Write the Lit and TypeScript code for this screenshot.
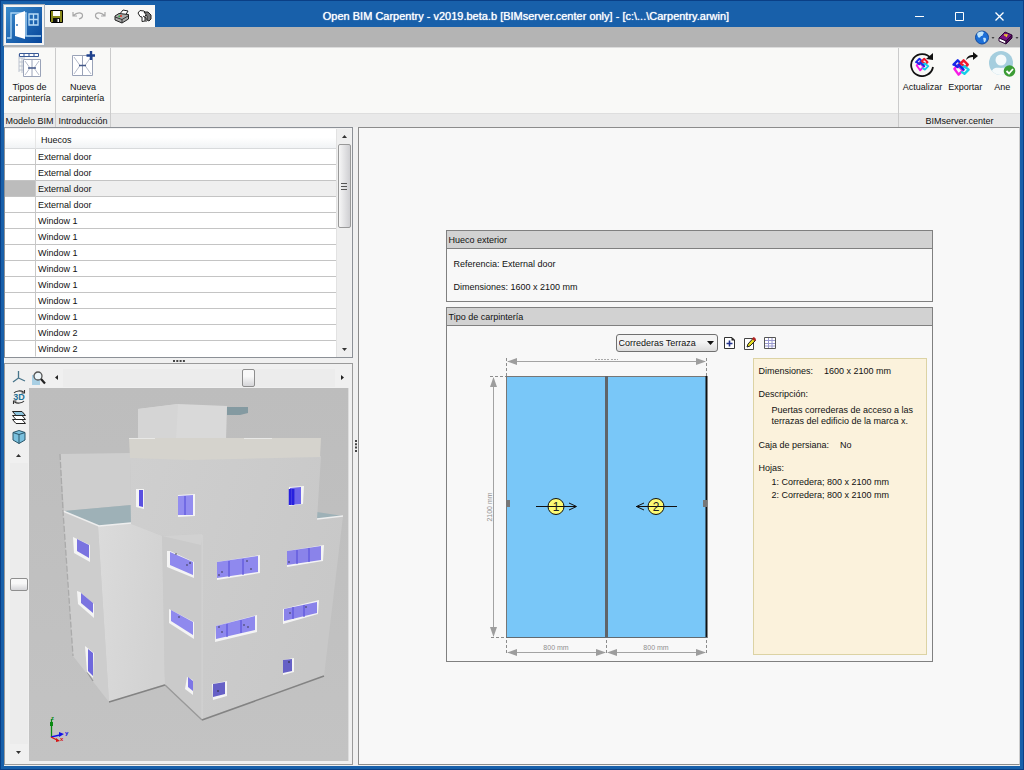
import { LitElement, html, css, svg } from "lit";
import { customElement } from "lit/decorators.js";
import { classMap } from "lit/directives/class-map.js";

const base = css`
  *, *::before, *::after { box-sizing: border-box; }
  button, select, input { font: inherit; color: inherit; margin: 0; }
  button { border: 0; padding: 0; background: none; display: inline-flex; align-items: center; justify-content: center; }
  svg { display: block; flex: none; }
`;

const shards = svg`
  <g fill="none" stroke-width="2.8" stroke-linejoin="round" stroke-linecap="round">
    <path d="M3 9 L8 4 L12 8" stroke="#1727e8"/>
    <path d="M10 9 L15 4 L20 9 L17 12 L12 8" stroke="#f0182c"/>
    <path d="M4 14 L8 10 L14 16 L9 21 Z" stroke="#f71be6"/>
    <path d="M12 13 L16 11 L21 15 L16 20 L13 18" stroke="#14cfe8"/>
    <path d="M4 9 L8 12 M9 9 L15 15" stroke="#1727e8"/>
  </g>`;

/* ---------- title bar ---------- */
@customElement("title-bar")
class TitleBar extends LitElement {
  static styles = [base, css`
    :host { display: grid; grid-template-columns: 48px auto 1fr auto; grid-template-rows: 26px 20px; background: #b4b4b4; }
    .blue { grid-column: 1 / -1; grid-row: 1; background: #1860aa; }
    .logo { grid-column: 1; grid-row: 1 / 3; margin: 4px 8px 2px 0; width: 40px; height: 40px; border: 2px solid #f4f4f4; outline: 1px solid #a9b3bd; z-index: 1; }
    .quick { grid-column: 2; grid-row: 1; margin-top: 4px; margin-left: -7px; display: flex; background: #f7f7f6; align-items: center; z-index: 1; }
    .quick button { width: 22px; height: 22px; }
    h1 { grid-column: 1 / -1; grid-row: 1; margin: 0; padding: 5px 0 0 28px; text-align: center; color: #fff; font-size: 11px; line-height: 20px; font-weight: 400; white-space: nowrap; text-shadow: 0 0 1px #fff; }
    .win { grid-column: 4; grid-row: 1; display: flex; color: #fff; padding: 4px 1px 0 0; }
    .win button { width: 40px; }
    .tools { grid-column: 1 / -1; grid-row: 2; display: flex; justify-content: flex-end; gap: 1px; align-items: center; }
    .tools button { width: 23px; height: 20px; }
  `];
  render() {
    return html`
      <div class="blue"></div>
      <button class="logo" aria-label="Menú">
        <svg width="36" height="36" viewBox="0 0 36 36">
          <defs><linearGradient id="lg" x2="1" y2="1"><stop stop-color="#3b8ccc"/><stop offset="1" stop-color="#06459a"/></linearGradient></defs>
          <rect width="36" height="36" fill="url(#lg)"/>
          <path d="M1 31H5V6H20V29H35" fill="none" stroke="#a9d3f3" stroke-width="1.4"/>
          <path d="M9 8L19 4V32L9 29Z" fill="#fff"/><circle cx="11" cy="18" r="1" fill="#3276b8"/>
          <path d="M23 7H32V18H23ZM27.500 7V18M23 12.500H32" fill="none" stroke="#b9dcf6" stroke-width="1.300"/>
        </svg>
      </button>
      <div class="quick">
        <button aria-label="Guardar"><svg width="13" height="13" viewBox="0 0 13 13"><path d="M.5.5H12.500V12.500H1.500L.5 11.500Z" fill="#8a8a1c" stroke="#000"/><path d="M3 1H10V6H3Z" fill="#fff"/><path d="M3 8H10V12H3Z" fill="#111"/><path d="M7.500 9H9V12H7.500Z" fill="#fff"/></svg></button>
        <button aria-label="Deshacer"><svg width="12" height="10" viewBox="0 0 12 10"><path d="M1 1V5H5M1.500 4.500C5 1 10 1 10.500 4C10.700 6 9 7.500 7 8" fill="none" stroke="#a8a8a8" stroke-width="1.200"/></svg></button>
        <button aria-label="Rehacer"><svg width="12" height="10" viewBox="0 0 12 10"><path d="M11 1V5H7M10.500 4.500C7 1 2 1 1.500 4C1.300 6 3 7.500 5 8" fill="none" stroke="#a8a8a8" stroke-width="1.200"/></svg></button>
        <button aria-label="Imprimir"><svg width="16" height="15" viewBox="0 0 16 15"><path d="M5 6L9 1L14 2L11 7Z" fill="#fff" stroke="#222"/><path d="M1 7L5 4.500L14.500 5.500V10L8 14L1 11Z" fill="#a9aaa9" stroke="#222"/><path d="M1 8L8 10.500L14 7M8 10.500V14" fill="none" stroke="#333"/><path d="M4 7L7 6L8 7L5 8.500Z" fill="#35a84b"/><circle cx="7" cy="7" r="1" fill="#e33"/></svg></button>
        <button aria-label="Exportar plano"><svg width="15" height="14" viewBox="0 0 15 14"><path d="M1 4L3 1.500L7 2L10 5L8 7V12L5 12.500V8L3 7.500Z" fill="#fff" stroke="#222"/><path d="M7 3H11L14 6V10L12 12L10 11V7Z" fill="#777" stroke="#222"/><path d="M6 7L9 9V13" fill="none" stroke="#222"/></svg></button>
      </div>
      <h1>Open BIM Carpentry - v2019.beta.b [BIMserver.center only] - [c:\\...\\Carpentry.arwin]</h1>
      <div class="win">
        <button aria-label="Minimizar"><svg width="9" height="9" viewBox="0 0 9 9"><path d="M0 4.500H9" stroke="#fff"/></svg></button>
        <button aria-label="Maximizar"><svg width="9" height="9" viewBox="0 0 9 9"><path d="M.5.5H8.500V8.500H.5Z" fill="none" stroke="#fff"/></svg></button>
        <button aria-label="Cerrar"><svg width="9" height="9" viewBox="0 0 9 9"><path d="M.5.5L8.500 8.500M8.500.5L.5 8.500" stroke="#fff" stroke-width="1.300"/></svg></button>
      </div>
      <div class="tools">
        <button aria-label="Web"><svg width="21" height="15" viewBox="0 0 21 15"><circle cx="8" cy="7.500" r="6.500" fill="#1c6fd8" stroke="#114a9c"/><path d="M3 4C5 1 9 1 10 3C8 4 10 6 7 6C6 8 5 8 4 7ZM9 8C12 7 13 9 11 12C9 12 10 10 9 8Z" fill="#bfe4fb"/><path d="M17.500 7H20.500L19 9Z" fill="#444"/></svg></button>
        <button aria-label="Ayuda"><svg width="21" height="15" viewBox="0 0 21 15"><path d="M1 8L7 2L14 5L8 11Z" fill="#7a1482" stroke="#2d0736"/><path d="M1 8L8 11V14L1 11Z" fill="#fff" stroke="#2d0736"/><path d="M8 11L14 5V8L8 14Z" fill="#4e0c57" stroke="#2d0736"/><path d="M6 5L9 5L8 7" fill="none" stroke="#f2cf2b" stroke-width="1.300"/><path d="M17.500 7H20.500L19 9Z" fill="#444"/></svg></button>
      </div>`;
  }
}

/* ---------- ribbon ---------- */
@customElement("ribbon-bar")
class RibbonBar extends LitElement {
  static styles = [base, css`
    :host { display: flex; height: 80px; background: #f9f9f7; border-top: 1px solid #dcdcdc; }
    section { display: flex; flex-direction: column; border-right: 1px solid #cbcbcb; }
    .spacer { flex: 1; }
    .items { display: flex; flex: 1; align-items: flex-start; justify-content: center; padding-top: 3px; }
    .items button { flex-direction: column; gap: 3px; line-height: 11px; text-align: center; }
    .big { width: 52px; }
    .last .items button { line-height: 14px; }
    .last { width: 121px; border-right: 0; }
    .last .items button { padding: 0 3px; }
    h2 { margin: 0; height: 14px; line-height: 14px; font-size: inherit; font-weight: 400; background: #e9e9e9; border-top: 1px solid #dedede; text-align: center; white-space: nowrap; }
    .narrow { width: 52px; }
    .wide { width: 55px; }
  `];
  render() {
    return html`
      <section class="narrow">
        <div class="items"><button class="big">
          <svg width="24" height="28" viewBox="0 0 24 28">
            <path d="M1 3V21M1 7H7M1 11H5M1 15H5M1 19H5M4 7V22" fill="none" stroke="#bcc3cf"/>
            <path d="M1.500 2.500H20.500V5.500H1.500ZM6 2V6M11 2V6M16 2V6" fill="#fff" stroke="#3a5a96"/>
            <path d="M5.500 8.500H22.500V25.500H5.500ZM14 8.500V25.500" fill="#fff" stroke="#9aa3b8"/>
            <path d="M7 10L12 17L7 24M21 10L16 17L21 24" fill="none" stroke="#b6bccb"/>
            <path d="M10 17H18" stroke="#44598a" stroke-width="1.500"/>
          </svg><span>Tipos de<br>carpintería</span></button></div>
        <h2>Modelo BIM</h2>
      </section>
      <section class="wide">
        <div class="items"><button class="big">
          <svg width="24" height="28" viewBox="0 0 24 28">
            <path d="M1.500 4.500H21.500V24.500H1.500ZM11.500 4.500V24.500" fill="#fff" stroke="#9aa3b8"/>
            <path d="M3 6L9 14.500L3 23M20 6L14 14.500L20 23" fill="none" stroke="#b6bccb"/>
            <path d="M8 14.500H15" stroke="#44598a" stroke-width="1.500"/>
            <path d="M20 0V9M15.500 4.500H24" stroke="#1f418d" stroke-width="2.400"/>
          </svg><span>Nueva<br>carpintería</span></button></div>
        <h2>Introducción</h2>
      </section>
      <section class="spacer"><div class="items"></div><h2></h2></section>
      <section class="last">
        <div class="items">
          <button><svg width="26" height="26" viewBox="0 0 26 26"><path d="M22 7.500A11 11 0 1 0 24 16" fill="none" stroke="#111" stroke-width="1.800"/><path d="M24 2V9L17 8Z" fill="#111"/><g transform="translate(5 5) scale(.68)">${shards}</g></svg><span>Actualizar</span></button>
          <button><svg width="26" height="26" viewBox="0 0 26 26"><g transform="translate(-1 6) scale(.84)">${shards}</g><path d="M14 9C15 5 18 4 21 4V1L26 5L21 9V6C18 6 16 7 14 9Z" fill="#111"/></svg><span>Exportar</span></button>
          <button><svg width="28" height="26" viewBox="0 0 28 26"><defs><clipPath id="av"><circle cx="13" cy="12" r="12"/></clipPath></defs><circle cx="13" cy="12" r="12" fill="#a5cede"/><g clip-path="url(#av)" fill="#f5fafb"><circle cx="13" cy="9" r="5.500"/><path d="M3 24C4 15 9 17 13 17S22 15 23 24Z"/></g><circle cx="21.500" cy="20" r="5.800" fill="#3c9c35"/><path d="M18.500 20L21 22.500L25 18" fill="none" stroke="#fff" stroke-width="1.800"/></svg><span>Ane</span></button>
        </div>
        <h2>BIMserver.center</h2>
      </section>`;
  }
}

/* ---------- list of openings ---------- */
const openings = [
  ...Array(4).fill("External door"),
  ...Array(7).fill("Window 1"),
  ...Array(2).fill("Window 2"),
];

@customElement("opening-list")
class OpeningList extends LitElement {
  static styles = [base, css`
    :host { display: flex; border: 1px solid #8c9096; background: #f2f2f2; padding: 1px 1px 0 0; }
    table { flex: 1; border-collapse: separate; border-spacing: 0; background: #fff; table-layout: fixed; }
    th { height: 20px; text-align: left; font-weight: 400; padding: 2px 0 0 5px; background: linear-gradient(#fff 45%, #f1f3f5); border-bottom: 1px solid #d8dadc; }
    td { height: 16px; line-height: 14px; padding: 1px 0 0 2px; border-bottom: 1px solid #c4c4c4; }
    tr:last-child td { border-bottom-color: #fff; }
    .mark { width: 31px; padding: 0; border-right: 1px solid #c8c8c8; }
    th.mark { border-right-color: #e6e6e6; }
    .sel td { background: #efefef; }
    .sel .mark { background: #bcbcbc; }
    .bar { width: 15px; display: flex; flex-direction: column; align-items: center; border-left: 1px solid #e2e2e2; background: #efefef; }
    .bar button { width: 14px; height: 15px; }
    .thumb { width: 13px; height: 84px; border: 1px solid #999; border-radius: 2px; background: linear-gradient(90deg, #f6f6f6, #cfcfd2); display: flex; align-items: center; justify-content: center; }
    .grow { flex: 1; }
  `];
  render() {
    return html`
      <table>
        <thead><tr><th class="mark"></th><th>Huecos</th></tr></thead>
        <tbody>${openings.map((name, i) => html`<tr class=${classMap({ sel: i === 2 })}><td class="mark"></td><td>${name}</td></tr>`)}</tbody>
      </table>
      <div class="bar">
        <button aria-label="Subir"><svg width="5" height="3" viewBox="0 0 5 3"><path d="M0 3L2.500 0L5 3Z" fill="#333"/></svg></button>
        <div class="thumb"><svg width="6" height="7" viewBox="0 0 6 7"><path d="M0 .5H6M0 3.500H6M0 6.500H6" stroke="#555"/></svg></div>
        <div class="grow"></div>
        <button aria-label="Bajar"><svg width="5" height="3" viewBox="0 0 5 3"><path d="M0 0H5L2.500 3Z" fill="#333"/></svg></button>
      </div>`;
  }
}

/* ---------- 3D view ---------- */
type Pane = { frame: string; glass: string; fill: string; mullions?: string };
const panes: Pane[] = [
  { frame: "136,489 144,489 144,509 136,507", glass: "139,490 143,490 143,507 139,506", fill: "#5a50e0" },
  { frame: "178,495 195,494 195,516 178,517", glass: "178,496 193,495 193,515 178,515", fill: "#938df0", mullions: "M185 496V515" },
  { frame: "289,487 304,486 303,504 289,506", glass: "290,488 301,487 301,504 290,505", fill: "#6c64ea", mullions: "M292 489V504M294 489V504" },
  { frame: "167,551 170,551 194,562 194,578 167,567", glass: "170,552 193,562 193,575 170,565", fill: "#8f89ee" },
  { frame: "217,562 260,555 260,573 217,580", glass: "217,562 258,556 258,572 217,578", fill: "#8f89ee", mullions: "M229 561V577M243 559V575" },
  { frame: "287,551 324,545 323,561 287,567", glass: "287,551 321,546 321,560 287,565", fill: "#8a83ea", mullions: "M297 550V564M309 548V562" },
  { frame: "169,609 194,622 194,639 169,623", glass: "171,610 193,622 193,635 171,621", fill: "#8f89ee" },
  { frame: "216,626 257,615 257,632 215,642", glass: "216,626 255,616 255,630 216,639", fill: "#8f89ee", mullions: "M227 624V637M241 620V633" },
  { frame: "283,609 319,600 318,614 283,624", glass: "284,609 317,602 317,613 284,621", fill: "#8a83ea", mullions: "M293 607V619M304 605V617" },
  { frame: "187,677 193,680 193,695 185,689", glass: "188,677 193,681 193,691 188,687", fill: "#7d76e6" },
  { frame: "212,684 227,681 227,696 213,700", glass: "213,684 225,682 225,694 213,697", fill: "#6660c6" },
  { frame: "283,660 294,658 294,672 283,675", glass: "283,660 292,659 292,671 283,673", fill: "#6660c6" },
  { frame: "73,537 90,545 90,562 74,553", glass: "77,539 89,545 89,558 77,551", fill: "#7a73e0" },
  { frame: "77,591 80,592 94,604 94,618 78,604", glass: "81,593 93,603 93,613 81,603", fill: "#7a73e0" },
  { frame: "85,646 94,653 93,678 87,672", glass: "88,649 93,653 93,676 88,671", fill: "#6f68dc" },
];

@customElement("model-view")
class ModelView extends LitElement {
  static styles = [base, css`
    :host { display: grid; grid-template-columns: 21px 1fr; grid-template-rows: 21px 1fr; border: 1px solid #9a9a9a; background: #f0f0f0; padding: 3px; min-height: 0; }
    .side { grid-row: 1 / 3; display: flex; flex-direction: column; align-items: center; padding-bottom: 1px; min-height: 0; }
    .side button { width: 20px; height: 20px; flex: none; }
    .side button.arrow { height: 16px; }
    .top { display: flex; align-items: center; }
    .top button { width: 20px; height: 20px; flex: none; }
    .top button.arrow { width: 14px; }
    input { appearance: none; background: #ececec; min-width: 0; min-height: 0; }
    .top input { flex: 1; height: 18px; width: 0; }
    .side input { writing-mode: vertical-lr; flex: 1; width: 18px; height: 0; }
    input::-webkit-slider-thumb { appearance: none; border: 1px solid #8e8e8e; border-radius: 2px; background: linear-gradient(#f8f8f8 40%, #d5d5d8); }
    .top input::-webkit-slider-thumb { width: 13px; height: 18px; }
    .side input::-webkit-slider-thumb { width: 18px; height: 13px; }
    .scene { background: linear-gradient(#bdbdbd, #c3c3c3); min-height: 0; border-right: 1px solid #ddd; }
    .scene svg { width: 100%; height: 100%; }
    .axis { font: 700 6px "Liberation Sans", Arial, sans-serif; }
    .badge { font: 700 9px "Liberation Sans", Arial, sans-serif; fill: #1d7197; }
  `];
  render() {
    return html`
      <div class="side">
        <button aria-label="Ejes"><svg width="14" height="14" viewBox="0 0 14 14"><path d="M6.500 1V8L1 12M6.500 8L13 11" fill="none" stroke="#47748a" stroke-width="1.300"/></svg></button>
        <button aria-label="Vista 3D"><svg width="14" height="14" viewBox="0 0 14 14"><path d="M2 3C4 .5 9 .3 11.500 2M12.500 0V3H9.500M12 11C10 13.500 5 13.700 2.500 12M1.500 14V11H4.500" fill="none" stroke="#333" stroke-width="1.100"/><text class="badge" x="7" y="10" text-anchor="middle">3D</text></svg></button>
        <button aria-label="Capas"><svg width="14" height="13" viewBox="0 0 14 13"><path d="M.5 8.500L4 12.500H13.500L10 8.500Z" fill="#fff" stroke="#222"/><path d="M.5 4.500L4 8.500H13.500L10 4.500Z" fill="#fff" stroke="#222"/><path d="M.5.5H10L13.500 4.500H4Z" fill="#8cc3dc" stroke="#222"/></svg></button>
        <button aria-label="Caja"><svg width="14" height="14" viewBox="0 0 14 14"><path d="M1 2.500L7 .5L13 2.500V10L7 13.500L1 10Z" fill="#79c0de" stroke="#2a5569"/><path d="M1 2.500L7 4.500L13 2.500M7 4.500V13.500" fill="none" stroke="#2a5569"/></svg></button>
        <button class="arrow" aria-label="Arriba"><svg width="5" height="3" viewBox="0 0 5 3"><path d="M0 3L2.500 0L5 3Z" fill="#333"/></svg></button>
        <input type="range" aria-label="Giro vertical" min="0" max="100" value="43">
        <button class="arrow" aria-label="Abajo"><svg width="5" height="3" viewBox="0 0 5 3"><path d="M0 0H5L2.500 3Z" fill="#333"/></svg></button>
      </div>
      <div class="top">
        <button aria-label="Zoom"><svg width="14" height="14" viewBox="0 0 14 14"><path d="M0 4H8V14H0Z" fill="#a8cfe4"/><circle cx="6" cy="5" r="4" fill="#edf6fa" stroke="#555" stroke-width="1.300"/><path d="M9 8L13 12.500" stroke="#222" stroke-width="2.200"/></svg></button>
        <button class="arrow" aria-label="Izquierda"><svg width="3" height="5" viewBox="0 0 3 5"><path d="M3 0V5L0 2.500Z" fill="#222"/></svg></button>
        <input type="range" aria-label="Giro horizontal" min="0" max="100" value="69">
        <button class="arrow" aria-label="Derecha"><svg width="3" height="5" viewBox="0 0 3 5"><path d="M0 0V5L3 2.500Z" fill="#222"/></svg></button>
      </div>
      <div class="scene">
        <svg viewBox="29 388 319 373" role="img" aria-label="Modelo 3D del edificio">
          <defs>
            <linearGradient id="front" x1="0" x2="1" y2=".4"><stop stop-color="#cfcfcf"/><stop offset="1" stop-color="#c8c8c8"/></linearGradient>
            <linearGradient id="wing" x1="0" x2="1" y2=".3"><stop stop-color="#dbdbdb"/><stop offset="1" stop-color="#d2d2d2"/></linearGradient>
          </defs>
          <polygon points="138,409 178,404 227,406 226,440 138,440" fill="#d9d9d9"/>
          <polygon points="138,409 178,404 176,440 138,440" fill="#d5d5d5"/>
          <polygon points="227,407 248,407 248,413 240,415 227,415" fill="#849aa1"/>
          <polygon points="60,454 130,453 131,505 64,511" fill="#cecece"/>
          <polygon points="64,511 131,505 131,524 99,526" fill="#9eb1b7"/>
          <polygon points="317,512 343,516 317,519" fill="#9eb1b7"/>
          <polygon points="63,511 98,526 109,702 73,656" fill="#cdcdcd"/>
          <polygon points="98,526 131,523 163,536 165,684 109,702" fill="url(#wing)"/>
          <polygon points="130,457 190,459 321,456 317,519 343,516 324,676 202,719 165,684 162,536 131,524" fill="url(#front)"/>
          <polygon points="162,536 202,534 202,719 165,684" fill="#cacaca"/>
          <polygon points="162,536 202,534 201,545" fill="#d1d1d1"/>
          <polygon points="129,438 321,438 320,457 190,460 130,458" fill="#d5d3cd"/>
          <path d="M129 438.500H155M244 438.500H272" stroke="#e8e8e6" fill="none"/>
          <path d="M202 535V719" stroke="#d8d8d8" stroke-width=".7"/>
          <path d="M63 511L99 526L131 523M317 519L343 516" stroke="#eee" stroke-width="1.400" fill="none"/>
          <path d="M60 454L63 511L73 656" stroke="#aaa" stroke-width="1.300" fill="none" stroke-dasharray="6 2"/>
          <path d="M109 702L165 685M202 720L324 676" stroke="#838383" stroke-width="1.600"/>
          <path d="M165 685L202 720M87 672L93 681" stroke="#999" stroke-width="1.300"/>
          ${panes.map((p) => svg`<polygon points=${p.frame} fill="#f4f4f4"/><polygon points=${p.glass} fill=${p.fill}/><path d=${p.mullions ?? ""} stroke="#5149d8"/>`)}
          <path d="M290 489V505M293 489V505" stroke="#2720df" stroke-width="2.500"/>
          <g fill="#222"><circle cx="176" cy="554" r=".7"/><circle cx="190" cy="563" r=".8"/><circle cx="187" cy="565" r=".7"/><circle cx="222" cy="572" r=".7"/><circle cx="219" cy="575" r=".7"/><circle cx="247" cy="561" r=".7"/><circle cx="251" cy="569" r=".7"/><circle cx="289" cy="562" r=".7"/><circle cx="219" cy="627" r=".7"/><circle cx="222" cy="632" r=".7"/><circle cx="244" cy="625" r=".7"/><circle cx="248" cy="627" r=".7"/><circle cx="179" cy="617" r=".7"/><circle cx="306" cy="607" r=".7"/><circle cx="290" cy="613" r=".7"/><circle cx="218" cy="691" r=".8"/><circle cx="289" cy="662" r=".8"/></g>
          <g class="axis">
            <path d="M51.500 737V719" stroke="#0a8a12" stroke-width="1.300"/><path d="M50 722H53V726H50Z" fill="#0a8a12"/><text x="51" y="720" fill="#0a8a12">z</text>
            <path d="M51 737L60 735" stroke="#1010e8" stroke-width="1.300"/><path d="M59 732L64 734L59 737Z" fill="#1010e8"/><text x="65" y="735" fill="#1010e8">y</text>
            <path d="M51 737L57 740" stroke="#d41414" stroke-width="1.300"/><path d="M56 738L60 741L56 742Z" fill="#d41414"/><text x="60" y="741" fill="#d41414">x</text>
          </g>
        </svg>
      </div>`;
  }
}

/* ---------- detail pane ---------- */
@customElement("detail-pane")
class DetailPane extends LitElement {
  static styles = [base, css`
    :host { display: flex; flex-direction: column; align-items: center; justify-content: center; gap: 5px; border: 1px solid #8c8c8c; border-right-color: #ccc; background: #f8f8f8; }
    section { width: 487px; max-width: 100%; border: 1px solid #808080; }
    h2 { margin: 0; height: 18px; padding-left: 2px; line-height: 18px; font-size: inherit; font-weight: 400; background: #d2d2d2; border-bottom: 1px solid #808080; }
    .ref { padding: 9px 7px 8px; line-height: 12px; display: grid; gap: 11px; }
    p { margin: 0; }
    .row { display: flex; align-items: flex-start; gap: 8px; padding: 8px 0 0 169px; }
    .pick { position: relative; display: flex; }
    select { appearance: none; width: 102px; height: 18px; padding: 0 0 0 2px; border: 1px solid #707070; border-radius: 3px; background: linear-gradient(#f4f4f4 45%, #dcdcdc); }
    .pick svg { position: absolute; right: 4px; top: 7px; pointer-events: none; }
    .row button { width: 12px; height: 18px; }
    .icons { display: flex; gap: 8px; margin-left: -2px; }
    .body { display: flex; justify-content: space-between; padding: 4px 5px 3px 36px; align-items: flex-start; }
    .note { width: 174px; height: 297px; margin-top: 2px; padding: 6px 5px; line-height: 12px; background: #fbf2dc; border: 1px solid #dcd3a4; }
    dl { margin: 0; }
    dl div { display: flex; gap: 11px; margin-bottom: 11px; }
    dl .stack { flex-direction: column; gap: 5px; line-height: 11px; margin-bottom: 12px; }
    dl .leaves { gap: 2px; line-height: 13px; }
    .stack dt { line-height: 12px; }
    dd { margin: 0; }
    .stack dd { padding-left: 13px; }
    .dim { font: 7px "Liberation Sans", Arial, sans-serif; fill: #909090; }
    .num { font: 12px "Liberation Sans", Arial, sans-serif; fill: #222; }
  `];
  render() {
    return html`
      <section>
        <h2>Hueco exterior</h2>
        <div class="ref"><p>Referencia: External door</p><p>Dimensiones: 1600 x 2100 mm</p></div>
      </section>
      <section>
        <h2>Tipo de carpintería</h2>
        <div class="row">
          <div class="pick">
            <select aria-label="Tipo de carpintería"><option>Correderas Terraza</option></select>
            <svg width="7" height="4" viewBox="0 0 7 4"><path d="M0 0H7L3.500 4Z" fill="#111"/></svg>
          </div>
          <div class="icons">
            <button aria-label="Añadir"><svg width="11" height="12" viewBox="0 0 11 12"><path d="M.5.5H8L10.500 3V11.500H.5Z" fill="#fff" stroke="#333"/><path d="M7.500 0L11 3.500H7.500Z" fill="#222"/><path d="M5.500 3.500V9.500M2.500 6.500H8.500" stroke="#23328c" stroke-width="1.600"/></svg></button>
            <button aria-label="Editar"><svg width="12" height="13" viewBox="0 0 12 13"><path d="M.5 1.500H9.500V12.500H.5Z" fill="#fff" stroke="#444"/><path d="M3 10L4 7L9 1.500L11.500 3.500L6 9Z" fill="#e5dd23" stroke="#222"/><path d="M9 .5L10 0L12 2L11.500 3.500L10.500 4L8 2Z" fill="#b32424"/></svg></button>
            <button aria-label="Tabla"><svg width="12" height="12" viewBox="0 0 12 12"><path d="M.5.5H11.500V11.500H.5Z" fill="#fff" stroke="#555"/><path d="M4.500 1V11M8 1V11M1 3.500H11M1 6.500H11M1 9H11" stroke="#9a9ad0"/></svg></button>
          </div>
        </div>
        <div class="body">
          <svg width="230" height="302" viewBox="483 356 230 302" role="img" aria-label="Alzado de la carpintería">
            <rect x="506.500" y="376.500" width="200" height="261" fill="#79c7f8" stroke="#777"/>
            <path d="M706.500 376V638" stroke="#111" stroke-width="2"/>
            <path d="M606.500 376V638" stroke="#606468" stroke-width="3"/>
            <path d="M506 637.500H707" stroke="#626a70"/>
            <rect x="507" y="500" width="3" height="7" fill="#777"/><rect x="703" y="500" width="4" height="7" fill="#777"/>
            <g stroke="#8c8c8c" stroke-dasharray="3 2" fill="none">
              <path d="M506.500 358V376M706.500 358V376M490 376.500H506M491 637.500H506M506.500 640V655M606.500 640V655M706.500 640V655"/>
            </g>
            <path d="M595 359.500H609M611 359.500H618" stroke="#aaa" stroke-dasharray="2 1"/>
            <g stroke="#a3a3a3"><path d="M508 361.500H705M493.500 378V636M508 652.500H605M608 652.500H705"/></g>
            <g fill="#9d9d9d">
              <path d="M507 361.500L517 358V365ZM706 361.500L696 358V365ZM493.500 377L490 387H497ZM493.500 637L490 627H497Z"/>
              <path d="M507 652.500L517 649V656ZM606 652.500L596 649V656ZM607 652.500L617 649V656ZM706 652.500L696 649V656Z"/>
            </g>
            <text class="dim" x="556" y="650" text-anchor="middle">800 mm</text>
            <text class="dim" x="656" y="650" text-anchor="middle">800 mm</text>
            <text class="dim" transform="translate(492 507) rotate(-90)" text-anchor="middle">2100 mm</text>
            <g fill="none" stroke="#111">
              <circle cx="556" cy="506.500" r="8" fill="#fdfb74"/><path d="M536 506.500H576M569 503L576.500 506.500L569 510"/>
              <circle cx="656" cy="506.500" r="8" fill="#fdfb74"/><path d="M677 506.500H636M644 503L636.500 506.500L644 510"/>
            </g>
            <text class="num" x="556" y="511" text-anchor="middle">1</text>
            <text class="num" x="656" y="511" text-anchor="middle">2</text>
          </svg>
          <div class="note">
            <dl>
              <div><dt>Dimensiones:</dt><dd>1600 x 2100 mm</dd></div>
              <div class="stack"><dt>Descripción:</dt><dd>Puertas correderas de acceso a las terrazas del edificio de la marca x.</dd></div>
              <div><dt>Caja de persiana:</dt><dd>No</dd></div>
              <div class="stack leaves"><dt>Hojas:</dt><dd>1: Corredera; 800 x 2100 mm<br>2: Corredera; 800 x 2100 mm</dd></div>
            </dl>
          </div>
        </div>
      </section>`;
  }
}

@customElement("app-root")
class AppRoot extends LitElement {
  static styles = [base, css`
    :host { display: flex; flex-direction: column; box-sizing: border-box; height: 100vh; min-height: 640px; border: 1px solid #0a3f86; background: #1860aa; padding: 0 3px 3px; font: 9px/12px "Liberation Sans", Arial, sans-serif; color: #111; overflow: hidden; }
    main { flex: 1; min-height: 0; display: grid; grid-template-columns: 349px 1fr; background: #f0f0f0; padding-bottom: 1px; }
    .left { display: flex; flex-direction: column; min-height: 0; min-width: 0; }
    .left model-view { flex: 1; }
    .grip { height: 5px; display: flex; align-items: center; justify-content: center; flex: none; }
    .work { display: flex; min-width: 0; }
    .work detail-pane { flex: 1; }
    .vgrip { width: 5px; display: flex; align-items: center; justify-content: center; flex: none; }
  `];
  render() {
    return html`
      <title-bar></title-bar>
      <ribbon-bar></ribbon-bar>
      <main>
        <div class="left">
          <opening-list></opening-list>
          <div class="grip"><svg width="12" height="2" viewBox="0 0 12 2"><path d="M0 1H12" stroke="#444" stroke-width="2" stroke-dasharray="2 1.300"/></svg></div>
          <model-view></model-view>
        </div>
        <div class="work">
          <div class="vgrip"><svg width="2" height="12" viewBox="0 0 2 12"><path d="M1 0V12" stroke="#444" stroke-width="2" stroke-dasharray="2 1.300"/></svg></div>
          <detail-pane></detail-pane>
        </div>
      </main>`;
  }
}
